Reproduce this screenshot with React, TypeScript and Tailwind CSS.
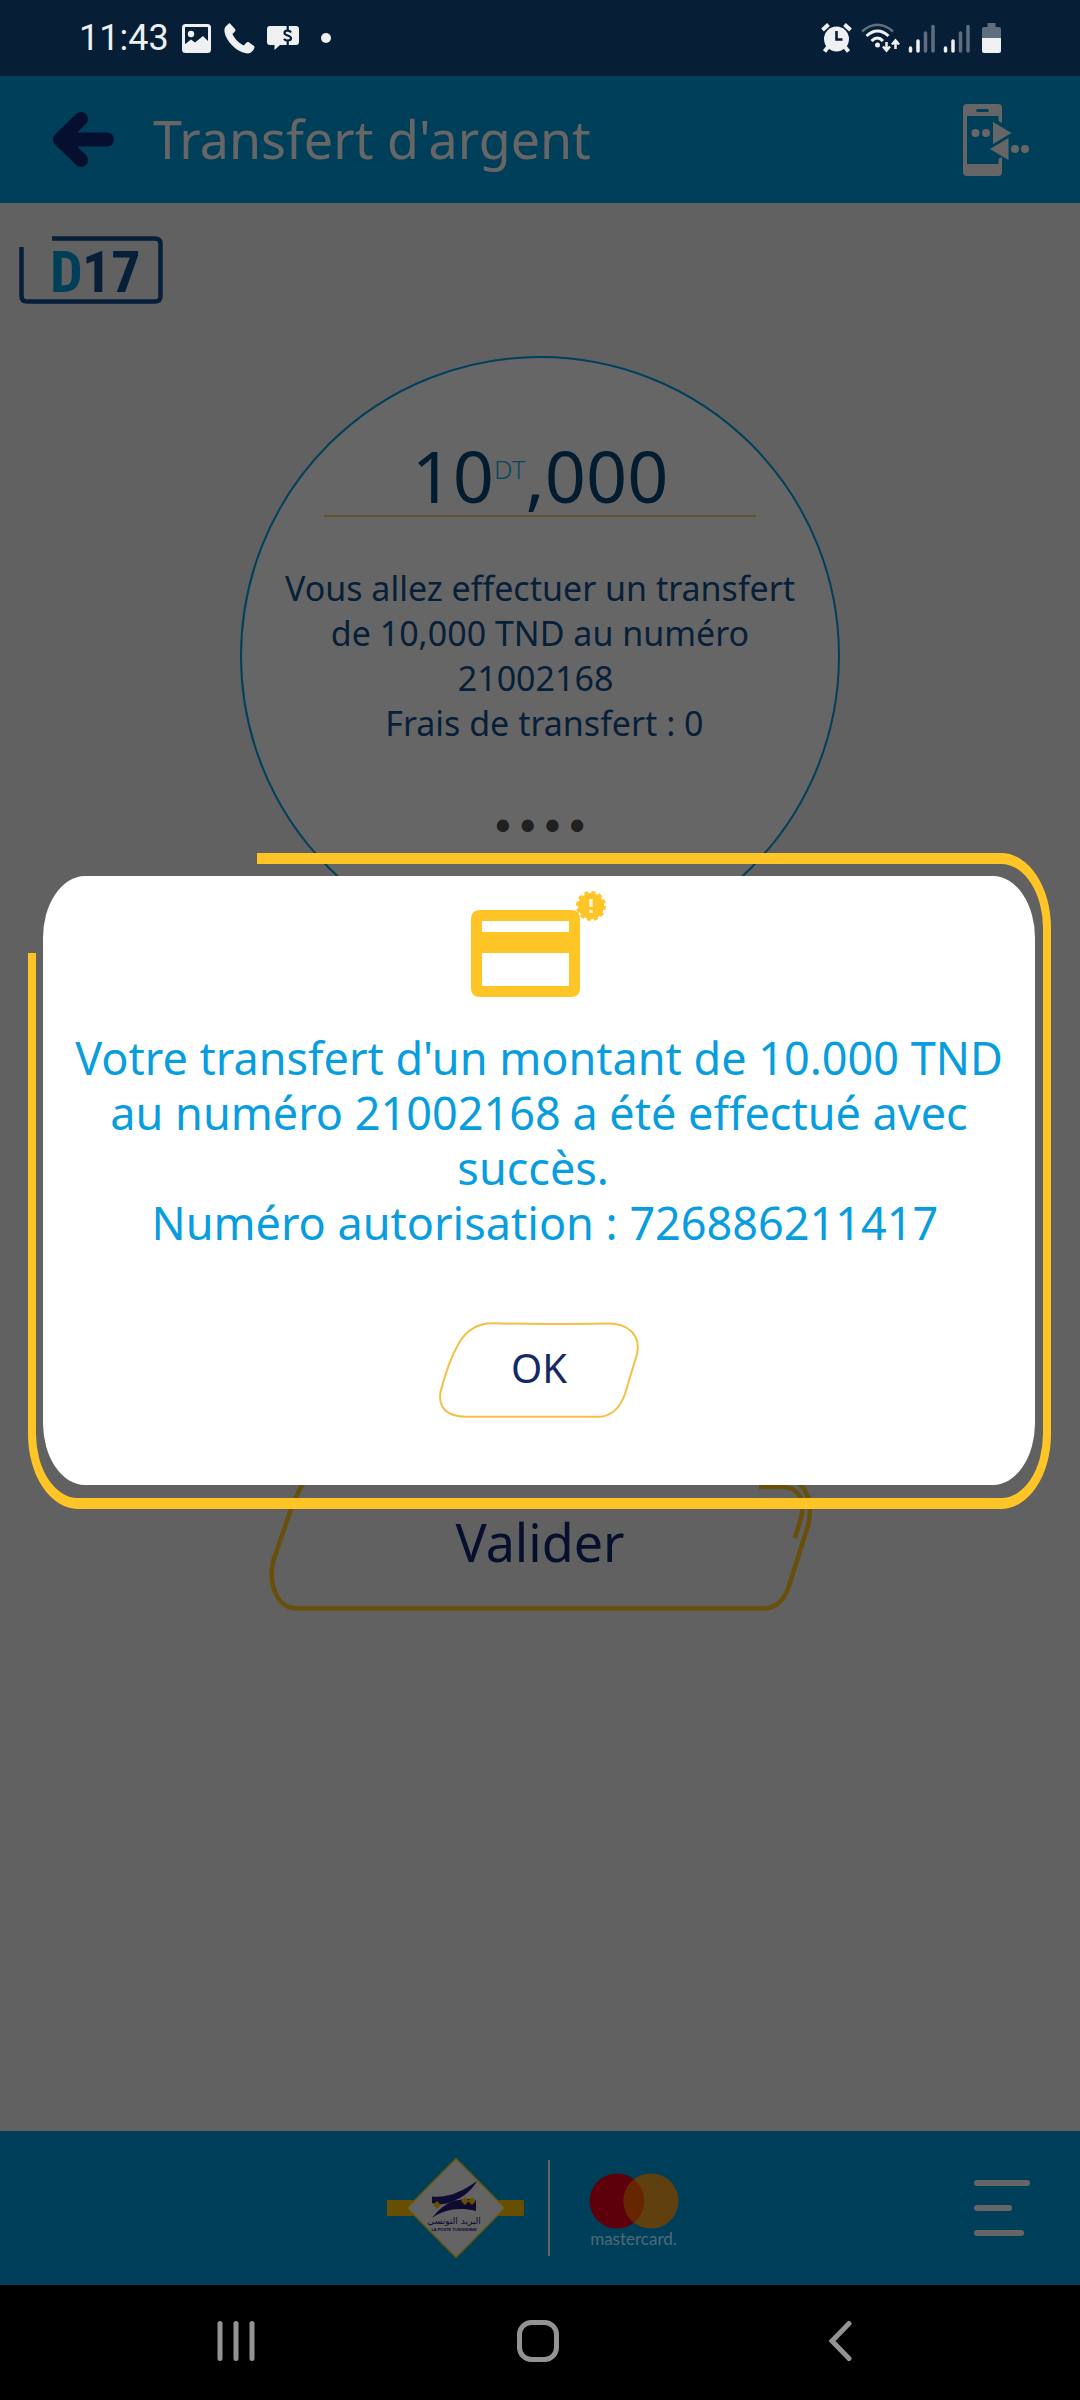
import { useState } from 'react';

function StatusBar() {
  return (
    <div className="flex h-[76px] shrink-0 items-center justify-between bg-[#071f36] pl-[79px] pr-[79px] text-[#eef0f2]">
      <div className="flex items-center">
        <span className="w-[91px] font-['Roboto',sans-serif] text-[36px] leading-[40px]">11:43</span>
        <svg className="ml-3 h-[29px] w-[29px]" viewBox="0 0 29 29" aria-hidden="true">
          <rect x="1.5" y="1.5" width="26" height="26" rx="2" fill="none" stroke="currentColor" strokeWidth="3" />
          <circle cx="9" cy="10" r="3.2" fill="currentColor" />
          <path d="M2 21L9 15.5L13 18.5L21 12L27 18V27H2Z" fill="currentColor" />
        </svg>
        <svg className="ml-[13px] h-[31px] w-[31px]" viewBox="0 0 31 31" aria-hidden="true">
          <path
            d="M6 0.5L11 6C12 7.2 11.500 8.200 8.500 11C10.500 15.500 14.500 20 20 22.500C22 19.500 23 18.600 24.500 19L30 23C31 24 30.500 25 29 27.500C27 30 25 30.800 22 30.300C12 28.500 2 18 0.500 9C0 5.500 1 4 3.500 1.800C4.500 0.800 5.300 0 6 0.500Z"
            fill="currentColor"
          />
        </svg>
        <svg className="ml-3 h-[24px] w-[32px]" viewBox="0 0 32 24" aria-hidden="true">
          <path d="M3 0H29Q32 0 32 3V16Q32 19 29 19H13L7.500 24V19H3Q0 19 0 16V3Q0 0 3 0Z" fill="currentColor" />
          <path d="M24 6.500C22.500 4 17.500 4 17.500 7C17.500 10 24 9 24 12.300C24 15.300 18.500 15 17 12.800M20.700 0V4M20.700 15V19" fill="none" stroke="#071f36" strokeWidth="2.200" />
        </svg>
        <span className="ml-[22px] h-[10px] w-[10px] rounded-full bg-current" />
      </div>
      <div className="flex items-center">
        <svg className="h-[30px] w-[31px]" viewBox="0 0 31 30" aria-hidden="true">
          <circle cx="15.500" cy="16" r="12.500" fill="currentColor" />
          <path d="M1.500 7L7.500 1.500M29.500 7L23.500 1.500" stroke="currentColor" strokeWidth="4" />
          <path d="M7 24L3.500 28.500M24 24L27.500 28.500" stroke="currentColor" strokeWidth="4" />
          <path d="M15.500 8V16.500H21.500" fill="none" stroke="#071f36" strokeWidth="2.600" />
        </svg>
        <svg className="ml-[9px] h-[30px] w-[39px]" viewBox="0 0 39 30" aria-hidden="true">
          <path d="M1 8.500Q16.500 -5 32 8.500" fill="none" stroke="#5f6e7f" strokeWidth="2.600" />
          <path d="M5.500 13Q16.500 3 27.500 13M10.500 18Q16.500 12 22 18" fill="none" stroke="currentColor" strokeWidth="3" />
          <circle cx="16.500" cy="22" r="2.500" fill="currentColor" />
          <path d="M25.500 19V27M22 23.500L25.500 27.500L29 23.500M34.500 26V18M31 21.500L34.500 17.500L38 21.500" fill="none" stroke="currentColor" strokeWidth="2.500" />
        </svg>
        <Signal />
        <Signal />
        <svg className="ml-3 h-[30px] w-[19px]" viewBox="0 0 19 30" aria-hidden="true">
          <path d="M5.500 0H13.500V4H17Q19 4 19 6V15H0V6Q0 4 2 4H5.500Z" fill="#5f6e7f" />
          <path d="M0 15H19V28Q19 30 17 30H2Q0 30 0 28Z" fill="currentColor" />
        </svg>
      </div>
    </div>
  );
}

function Signal() {
  return (
    <svg className="ml-2 h-[29px] w-[27px]" viewBox="0 0 27 29" fill="none" strokeWidth="3.500" strokeLinecap="round" aria-hidden="true">
      <path d="M2.500 24V27M10 17V27" stroke="currentColor" />
      <path d="M17.500 9V27M25 2.500V27" stroke="#5f6e7f" />
    </svg>
  );
}

function Header() {
  return (
    <header className="flex h-[127px] shrink-0 items-center bg-[#003f5a] pl-[53px] pr-[50px]">
      <button type="button" aria-label="Retour">
        <svg className="h-[55px] w-[61px]" viewBox="0 0 61 55" aria-hidden="true">
          <path d="M28 7L7 27.500L28 48M10 27.500H54" fill="none" stroke="#060f2f" strokeWidth="14" strokeLinecap="round" strokeLinejoin="round" />
        </svg>
      </button>
      <h1 className="ml-[39px] flex-1 pb-0.5 text-[52px] leading-[60px] text-[#666666]">Transfert d'argent</h1>
      <button type="button" aria-label="Transfert mobile">
        <svg className="h-[72px] w-[67px]" viewBox="0 0 67 72" fill="#666666" aria-hidden="true">
          <path fillRule="evenodd" d="M4 0H35Q39 0 39 4V19L35.500 17V12H4V60H35.500V55L39 53V68Q39 72 35 72H4Q0 72 0 68V4Q0 0 4 0ZM15 5Q13 5 13 6.500Q13 8 15 8H24Q26 8 26 6.500Q26 5 24 5Z" />
          <circle cx="12.500" cy="29" r="4" />
          <circle cx="23" cy="29" r="4" />
          <path d="M30 18L48.500 29L30 40Z" />
          <path d="M45.500 34V56L27 45Z" />
          <circle cx="52" cy="45" r="4" />
          <circle cx="62" cy="45" r="4" />
        </svg>
      </button>
    </header>
  );
}

function Brand() {
  return (
    <svg className="h-[68px] w-[144px]" viewBox="0 0 144 68" role="img" aria-label="D17">
      <path d="M33 2.500H136Q141.500 2.500 141.500 8V60Q141.500 65.500 136 65.500H8Q2.500 65.500 2.500 60V11" fill="none" stroke="#071f38" strokeWidth="4.500" />
      <g fontFamily="'Roboto Condensed','Liberation Sans Narrow','Liberation Sans',sans-serif" fontWeight="700" fontSize="58">
        <text x="31" y="56" fill="#003f5a">D</text>
        <text x="63" y="56" fill="#071f38">17</text>
      </g>
    </svg>
  );
}

function ValidateButton() {
  return (
    <button type="button" className="relative mt-[517px] flex h-[138px] w-[545px] items-center justify-center self-center text-[52px] leading-[60px] text-[#060f2c]">
      <svg className="absolute inset-0 h-full w-full" viewBox="0 0 545 138" fill="none" stroke="#684f0c" strokeWidth="4.500" aria-hidden="true">
        <path d="M62 3C44 3 36 6 31 18Q26 27 23 36L8 80C-2 104 6 136 30 135.500H495C508 135.500 516 128 521 113L537 62C547 36 543 3 508 3Z" />
        <path d="M491 14H514C530 14 538 26 533 45L527 65" />
      </svg>
      <span className="relative">Valider</span>
    </button>
  );
}

function Footer() {
  return (
    <footer className="grid h-[154px] shrink-0 grid-cols-[1fr_auto_1fr] items-center bg-[#003f5a]">
      <div className="col-start-2 flex items-center pr-[14px]">
        <svg className="h-[102px] w-[137px]" viewBox="0 0 137 102" role="img" aria-label="La Poste Tunisienne">
          <path d="M0 43H137V59H0Z" fill="#665000" />
          <path d="M69 1.500L118 51L69 100.500L20 51Z" fill="#646464" stroke="#6a5608" strokeWidth="1.500" />
          <g fill="#0f0b30">
            <path d="M45 39.500C62 41 76 34 90 24C82 39 64 47 52 47.500L45 46Z" />
            <path d="M45 61C55 49 62 44 72 43L80 42L89 43V54C72 50 58 52 45 61Z" />
            <text x="67" y="67" textAnchor="middle" fontFamily="'DejaVu Sans',sans-serif" fontSize="9">البريد التونسي</text>
            <text x="67" y="74" textAnchor="middle" fontFamily="'Liberation Sans',sans-serif" fontWeight="700" fontSize="4">LA POSTE TUNISIENNE</text>
          </g>
          <path d="M50 44L54 48L50 52L46 48ZM78 40L81.500 43.500L85 40L89 44L85 48L81.500 44.500L78 48L74 44Z" fill="#665000" />
        </svg>
        <span className="ml-6 h-[96px] w-[2px] bg-[#60666a]" />
        <div className="ml-[38px] flex w-[92px] flex-col items-center pt-1.5">
          <svg className="h-[56px] w-[90px]" viewBox="0 0 90 56" role="img" aria-label="Mastercard">
            <circle cx="28" cy="28" r="27.500" fill="#5e000b" />
            <circle cx="62" cy="28" r="27.500" fill="#61400f" />
            <path d="M45 6.500A27.500 27.500 0 0 1 45 49.500A27.500 27.500 0 0 1 45 6.500Z" fill="#662600" />
          </svg>
          <span className="font-['Lato',sans-serif] text-[17px] leading-5 text-[#4f6975]">mastercard.</span>
        </div>
      </div>
      <button type="button" aria-label="Menu" className="mr-[50px] flex h-14 w-14 flex-col justify-between justify-self-end">
        <span className="h-1.5 w-full rounded-full bg-[#666666]" />
        <span className="h-1.5 w-[38px] rounded-full bg-[#666666]" />
        <span className="h-1.5 w-[50px] rounded-full bg-[#666666]" />
      </button>
    </footer>
  );
}

function SystemNav() {
  return (
    <nav className="grid h-[115px] shrink-0 grid-cols-3 items-center justify-items-center bg-black pb-1 pl-[85px] pr-[89px] text-[#939393]">
      <button type="button" aria-label="Applications récentes">
        <svg className="h-[42px] w-[42px]" viewBox="0 0 42 42" fill="none" stroke="currentColor" strokeWidth="5" strokeLinecap="round">
          <path d="M5 3.500V38.500M21 3.500V38.500M37 3.500V38.500" />
        </svg>
      </button>
      <button type="button" aria-label="Accueil">
        <svg className="h-[42px] w-[42px]" viewBox="0 0 42 42" fill="none" stroke="currentColor" strokeWidth="5">
          <rect x="2.500" y="2.500" width="37" height="37" rx="12" />
        </svg>
      </button>
      <button type="button" aria-label="Précédent">
        <svg className="h-[42px] w-[24px]" viewBox="0 0 24 42" fill="none" stroke="currentColor" strokeWidth="5" strokeLinecap="round">
          <path d="M21 3.500L4 21L21 38.500" />
        </svg>
      </button>
    </nav>
  );
}

function SuccessDialog() {
  return (
    <div className="absolute inset-0 flex items-center pl-[43px] pr-[45px]">
      <div role="dialog" aria-modal="true" aria-labelledby="transfer-result" className="relative flex w-full flex-col items-center rounded-[42px/62px] bg-white px-5 pb-[67px] pt-[14px]">
        <div className="pointer-events-none absolute -bottom-6 -left-[15px] -right-4 -top-[23px] rounded-[50px/75px] border-x-8 border-y-[11px] border-[#ffc527] [clip-path:polygon(229px_0,100%_0,100%_100%,0_100%,0_100px,229px_100px)]" />
        <svg className="h-[108px] w-[136px]" viewBox="0 0 136 108" aria-hidden="true">
          <path fillRule="evenodd" fill="#ffc527" d="M9 20H100Q109 20 109 29V98Q109 107 100 107H9Q0 107 0 98V29Q0 20 9 20ZM11 31V42H98V31ZM11 63V96H98V63Z" />
          <circle cx="120" cy="16" r="13" fill="#ffc527" />
          <circle cx="120" cy="16" r="13.500" fill="none" stroke="#ffc527" strokeWidth="3" strokeDasharray="4 3.070" />
          <path d="M120 9V17M120 20V23" stroke="#fff3cd" strokeWidth="3.500" />
        </svg>
        <p id="transfer-result" className="mt-8 text-center text-[45px] leading-[55px] text-[#079ddf]">
          Votre transfert d'un montant de 10.000 TND au numéro 21002168 a été effectué avec succès.&nbsp;
          <br />
          &nbsp;Numéro autorisation : 726886211417
        </p>
        <button type="button" className="relative mt-[72px] flex h-24 w-[200px] items-center justify-center pb-1 text-[40px] leading-[48px] text-[#15286a]">
          <svg className="absolute inset-0 h-full w-full" viewBox="0 0 200 96" fill="none" stroke="#f3c043" strokeWidth="2" aria-hidden="true">
            <path d="M54 1.300Q100 2.500 168 1.500C190 1 202 14 198 32L186 72Q178 94 160 94.800H27C8 94.500 -1 86 1.500 70Q9 40 20 21Q32 1 54 1.300Z" />
          </svg>
          <span className="relative">OK</span>
        </button>
      </div>
    </div>
  );
}

export default function App() {
  const [pin, setPin] = useState('1234');
  return (
    <div className="flex min-h-screen flex-col bg-[#616161] font-['Noto_Sans',sans-serif]">
      <StatusBar />
      <div className="relative flex flex-1 flex-col">
        <Header />
        <main className="flex flex-1 flex-col">
          <div className="pl-[19px] pt-[33px]">
            <Brand />
          </div>
          <section className="mt-[52px] flex h-[600px] w-[600px] flex-col items-center self-center rounded-full border-2 border-[#00405c] bg-[#666666] pt-[82px] text-[#071f38]">
            <p className="w-[432px] border-b-2 border-[#66522a] pb-[5px] text-center text-[72px] leading-[70px] text-[#031c30]">
              10<sup className="relative -top-6 align-baseline text-[26px] font-light leading-none text-[#0a455e]">DT</sup>,000
            </p>
            <p className="mt-[49px] text-center text-[34px] leading-[45px]">
              Vous allez effectuer un transfert
              <br />
              de 10,000 TND au numéro
              <br />
              21002168&nbsp;
              <br />
              &nbsp;Frais de transfert : 0
            </p>
            <input
              type="password"
              aria-label="Code PIN"
              value={pin}
              onChange={(e) => setPin(e.target.value)}
              maxLength={4}
              className="mt-[52px] h-[60px] w-[240px] bg-transparent text-center font-['DejaVu_Sans',sans-serif] text-[42px] leading-[60px] text-[#202020] outline-none"
            />
          </section>
          <ValidateButton />
        </main>
        <Footer />
        <SuccessDialog />
      </div>
      <SystemNav />
    </div>
  );
}
